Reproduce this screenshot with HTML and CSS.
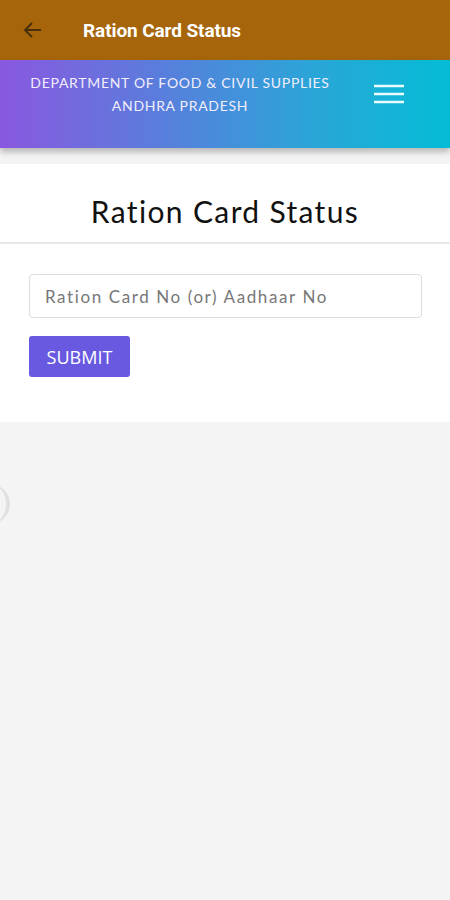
FILE: index.html
```html
<!DOCTYPE html>
<html>
<head>
<meta charset="utf-8">
<link rel="stylesheet" href="styles.css">
</head>
<body>
<header class="appbar">
  <svg class="back" width="24" height="24" viewBox="0 0 24 24"><path d="M20 12H5M11 5l-7 7 7 7" fill="none" stroke="#4a300a" stroke-width="2"/></svg>
  <h1 class="appbar-title">Ration Card Status</h1>
</header>
<div class="banner">
  <div class="banner-text">
    <div>DEPARTMENT OF FOOD &amp; CIVIL SUPPLIES</div>
    <div>ANDHRA PRADESH</div>
  </div>
  <svg class="menu" width="30" height="20" viewBox="0 0 30 20"><path d="M0 2h30M0 10h30M0 18h30" stroke="#e8fbff" stroke-width="2.4"/></svg>
</div>
<main class="card">
  <h2 class="card-title">Ration Card Status</h2>
  <div class="card-body">
    <div class="input">Ration Card No (or) Aadhaar No</div>
    <button class="submit">SUBMIT</button>
  </div>
</main>
<div class="ghost"></div>
</body>
</html>
```
FILE: styles.css
```css
html, body { margin: 0; padding: 0; }
body {
  width: 450px;
  height: 900px;
  background: #f4f4f4;
  font-family: "Lato", "Noto Sans", sans-serif;
  position: relative;
  overflow: hidden;
}
.appbar {
  height: 60px;
  background: #a6650a;
  display: flex;
  align-items: center;
  padding-left: 21px;
}
.back { flex: none; }
.appbar-title {
  margin: 0 0 0 38px;
  font-family: Roboto, sans-serif;
  font-weight: 700;
  font-size: 19px;
  color: #fff;
  letter-spacing: -0.1px;
}
.banner {
  height: 88px;
  background: linear-gradient(90deg, #8a58e0 0%, #5a7ddc 35%, #2aa6d8 70%, #04bcd6 100%);
  display: flex;
  align-items: flex-start;
  box-shadow: 0 4px 6px rgba(0,0,0,0.25);
  position: relative;
  z-index: 1;
}
.banner-text {
  width: 360px;
  text-align: center;
  color: #f2eefc;
  font-size: 14px;
  line-height: 23px;
  padding-top: 11px;
  letter-spacing: 0.7px;
}
.menu { margin: 24px 0 0 14px; }
.card {
  margin-top: 16px;
  background: #fff;
  height: 258px;
}
.card-title {
  margin: 0;
  font-weight: 400;
  font-size: 30px;
  color: #111;
  text-align: center;
  height: 78px;
  line-height: 94px;
  border-bottom: 2px solid #e8e8e8;
  letter-spacing: 1.35px;
}
.card-body {
  padding: 30px 28px 0 29px;
  display: flex;
  flex-direction: column;
  align-items: flex-start;
  gap: 18px;
}
.input {
  box-sizing: border-box;
  width: 393px;
  height: 44px;
  border: 1px solid #dcdcdc;
  border-radius: 4px;
  padding-left: 15px;
  display: flex;
  align-items: center;
  color: #777;
  font-size: 17px;
  letter-spacing: 1.6px;
}
.submit {
  width: 101px;
  height: 41px;
  border: none;
  border-radius: 3px;
  background: #6959e1;
  color: #fff;
  font-family: "Open Sans", sans-serif;
  font-size: 18px;
  line-height: 38px;
  padding: 0;
}
.ghost {
  position: absolute;
  left: -30px;
  top: 484px;
  width: 36px;
  height: 40px;
  border-radius: 50%;
  border-right: 4px solid #e0e0e0;
}
```
